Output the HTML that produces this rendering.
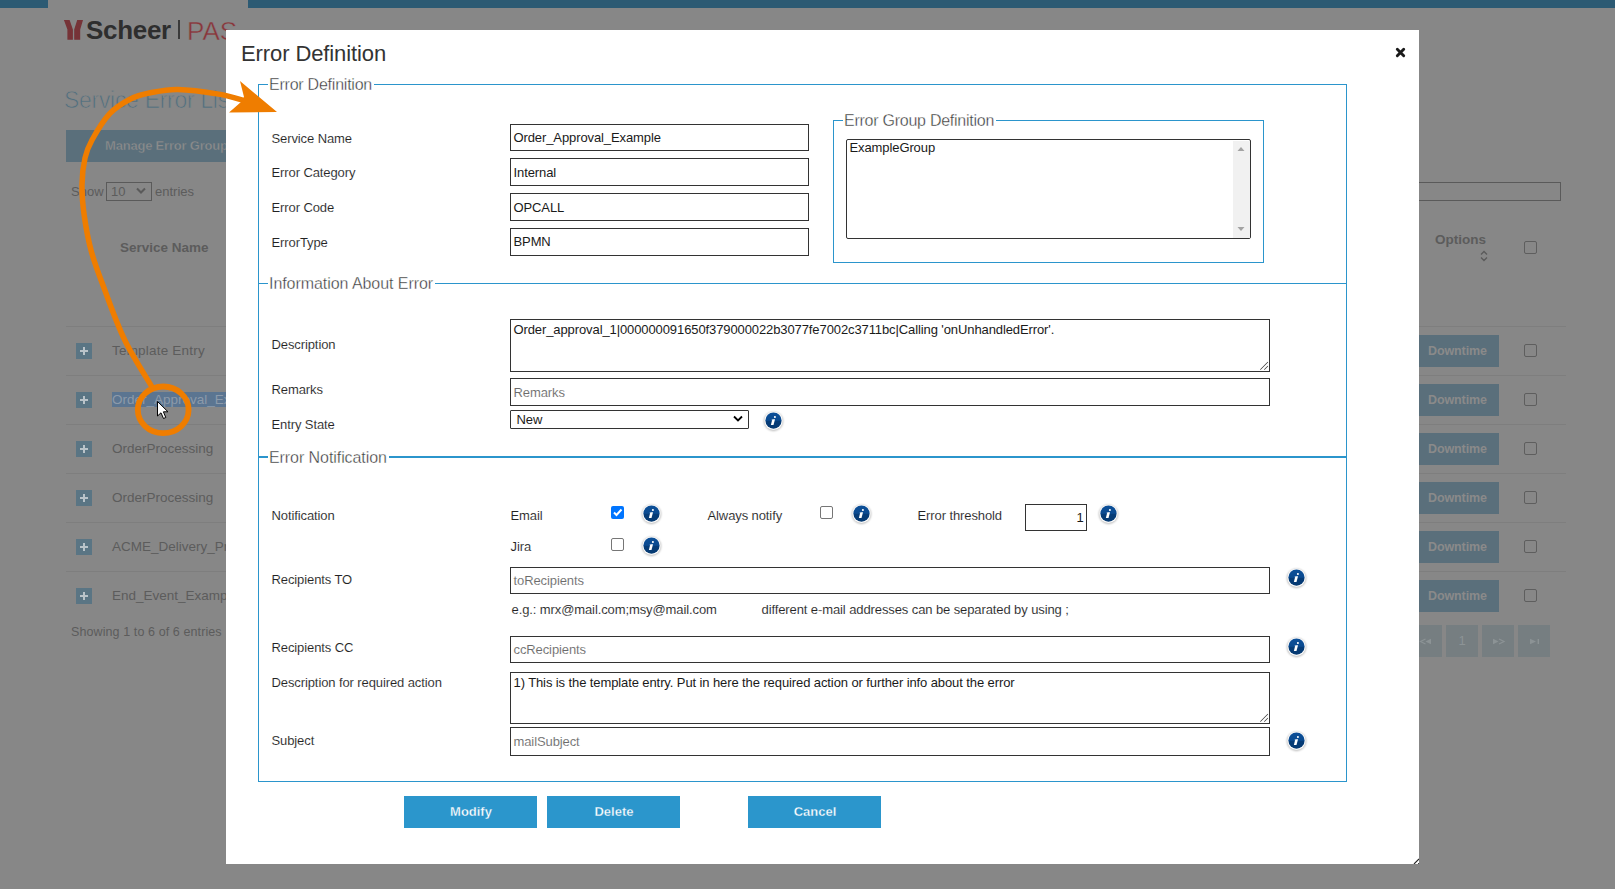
<!DOCTYPE html>
<html><head><meta charset="utf-8">
<style>
*{box-sizing:border-box;}
html,body{margin:0;padding:0;}
body{width:1615px;height:889px;overflow:hidden;position:relative;background:#878787;font-family:"Liberation Sans",sans-serif;}
.a{position:absolute;white-space:nowrap;line-height:1;}
.r{position:absolute;}
/* modal */
#modal{position:absolute;left:226px;top:30px;width:1193px;height:834px;background:#fff;}
.l{position:absolute;white-space:nowrap;line-height:1;font-size:13px;color:#222;letter-spacing:-0.1px;-webkit-text-stroke:0.1px #fff;margin-left:0.5px;}
.in{position:absolute;border:1px solid #333;background:#fff;}
.ph{color:#757575;}
.v{color:#1a1a1a;-webkit-text-stroke-width:0 !important;}
.ph{color:#6a6a6a !important;}
.leg{position:absolute;white-space:nowrap;line-height:1;font-size:16px;color:#333;background:#fff;padding:0 2px 0 1px;letter-spacing:-0.25px;-webkit-text-stroke:0.35px #fff;}
.hl{position:absolute;height:1px;background:#2b95cc;}
.vl{position:absolute;width:1px;background:#2b95cc;}
.btn{position:absolute;background:#2b96cc;color:#fff;font-size:13px;font-weight:bold;text-align:center;line-height:32px;height:32px;width:133px;top:796px;padding-left:1px;-webkit-text-stroke:0.3px #2b96cc;}
.info{position:absolute;width:24px;height:24px;overflow:visible;}
.cb{position:absolute;width:13px;height:13px;border:1px solid #767676;border-radius:2px;background:#fff;}
/* bg */
.bgt{position:absolute;white-space:nowrap;line-height:1;color:#5c5c5c;font-size:13.5px;}
.sep{position:absolute;left:66px;width:1500px;height:1px;background:#7e7e7e;}
.plus{position:absolute;left:76px;width:16px;height:16px;background:#5a7584;}
.plus:before{content:"";position:absolute;left:4px;top:7px;width:8px;height:2px;background:#b9c3c9;}
.plus:after{content:"";position:absolute;left:7px;top:4px;width:2px;height:8px;background:#b9c3c9;}
.dt{position:absolute;left:1400px;width:99px;height:32px;background:#5a6f7b;color:#8a8a8a;font-size:12.5px;font-weight:bold;letter-spacing:-0.1px;}
.dt span{position:absolute;left:28px;top:10px;line-height:1;}
.bcb{position:absolute;left:1524px;width:13px;height:13px;border:1px solid #5e5e5e;border-radius:2px;}
.pg{position:absolute;top:625px;width:32px;height:32px;background:#767e81;color:#8c9395;font-size:13px;text-align:center;line-height:32px;}
</style></head>
<body>
<!-- background page -->
<div class="r" style="left:0;top:0;width:48px;height:8px;background:#2c5a73"></div>
<div class="r" style="left:248px;top:0;width:1367px;height:8px;background:#2c5a73"></div>
<!-- logo -->
<svg class="r" style="left:60px;top:16px" width="26" height="26" viewBox="0 0 26 26">
<path d="M3.9 3.9 L9.6 3.9 L12.9 13.6 L12.9 23.8 L7.4 23.8 L7.4 13.6 Z" fill="#763337"/>
<path d="M17.2 3.9 L23 3.9 L20.2 13.6 L20.2 23.8 L14.2 23.8 L14.2 13.6 Z" fill="#763337"/>
</svg>
<div class="a" style="left:86px;top:17px;font-size:26px;font-weight:bold;color:#2e2e2e;letter-spacing:-0.3px">Scheer</div>
<div class="r" style="left:178px;top:20px;width:2px;height:19px;background:#3a3a3a"></div>
<div class="a" style="left:187px;top:18px;font-size:26px;color:#8a363b;letter-spacing:0px;font-weight:normal;-webkit-text-stroke:0.45px #878787">PAS</div>
<div class="a" style="left:64px;top:89px;font-size:23px;color:#52707f;letter-spacing:-0.3px;-webkit-text-stroke:0.75px #878787">Service Error List</div>
<div class="r" style="left:66px;top:130px;width:200px;height:32px;background:#5a6f7b"></div>
<div class="a" style="left:105px;top:139px;font-size:13px;font-weight:bold;color:#8c8c8c;letter-spacing:-0.2px;-webkit-text-stroke:0.35px #5a6f7b">Manage Error Groups</div>
<div class="bgt" style="left:71px;top:185px;font-size:13px">Show</div>
<div class="r" style="left:106px;top:182px;width:46px;height:19px;border:1px solid #5a5a5a"></div>
<div class="bgt" style="left:111px;top:185px;font-size:13px">10</div>
<svg class="r" style="left:136px;top:187px" width="10" height="8"><path d="M1 1.5 L5 5.5 L9 1.5" stroke="#5a5a5a" stroke-width="2" fill="none"/></svg>
<div class="bgt" style="left:155px;top:185px;font-size:13px">entries</div>
<div class="r" style="left:1400px;top:182px;width:161px;height:19px;border:1px solid #5a5a5a"></div>
<div class="bgt" style="left:120px;top:241px;font-weight:bold">Service Name</div>
<div class="bgt" style="left:1435px;top:233px;font-weight:bold">Options</div>
<svg class="r" style="left:1479px;top:250px" width="10" height="12"><path d="M2 4.5 L5 1.5 L8 4.5 M2 7.5 L5 10.5 L8 7.5" stroke="#5a5a5a" stroke-width="1.3" fill="none"/></svg>
<div class="bcb" style="top:241px"></div>
<div class="sep" style="top:326px"></div>
<div class="sep" style="top:375px"></div>
<div class="sep" style="top:424px"></div>
<div class="sep" style="top:473px"></div>
<div class="sep" style="top:522px"></div>
<div class="sep" style="top:571px"></div>
<div class="plus" style="top:343px"></div>
<div class="plus" style="top:392px"></div>
<div class="plus" style="top:441px"></div>
<div class="plus" style="top:490px"></div>
<div class="plus" style="top:539px"></div>
<div class="plus" style="top:588px"></div>
<div class="bgt" style="left:112px;top:344px;letter-spacing:0.2px">Template Entry</div>
<div class="r" style="left:112px;top:392px;width:120px;height:15px;background:#5b7591"></div>
<div class="bgt" style="left:112px;top:393px;color:#8c9aaa">Order_Approval_Example</div>
<div class="bgt" style="left:112px;top:442px">OrderProcessing</div>
<div class="bgt" style="left:112px;top:491px">OrderProcessing</div>
<div class="bgt" style="left:112px;top:540px">ACME_Delivery_Process</div>
<div class="bgt" style="left:112px;top:589px">End_Event_Example</div>
<div class="bgt" style="left:71px;top:626px;font-size:12.5px;letter-spacing:0.1px">Showing 1 to 6 of 6 entries</div>
<div class="dt" style="top:335px"><span>Downtime</span></div>
<div class="dt" style="top:384px"><span>Downtime</span></div>
<div class="dt" style="top:433px"><span>Downtime</span></div>
<div class="dt" style="top:482px"><span>Downtime</span></div>
<div class="dt" style="top:531px"><span>Downtime</span></div>
<div class="dt" style="top:580px"><span>Downtime</span></div>
<div class="bcb" style="top:344px"></div>
<div class="bcb" style="top:393px"></div>
<div class="bcb" style="top:442px"></div>
<div class="bcb" style="top:491px"></div>
<div class="bcb" style="top:540px"></div>
<div class="bcb" style="top:589px"></div>
<div class="pg" style="left:1410px"></div>
<div class="pg" style="left:1446px">1</div>
<div class="pg" style="left:1482px"></div>
<div class="pg" style="left:1518px"></div>
<svg class="r" style="left:1410px;top:630px" width="140" height="20"><g fill="#8c9395" stroke="#8c9395">
<path d="M15.5 9 L10.5 11.5 L15.5 14" fill="none" stroke-width="1.2"/><path d="M21 8.8 L15.5 11.5 L21 14.2 Z" stroke="none"/>
<path d="M83 8.8 L88.5 11.5 L83 14.2 Z" stroke="none"/><path d="M89 9 L94 11.5 L89 14" fill="none" stroke-width="1.2"/>
<path d="M120 8.8 L126 11.5 L120 14.2 Z" stroke="none"/><rect x="127.6" y="9" width="1.4" height="5" stroke="none"/>
</g></svg>
<!-- modal -->
<div id="modal"></div>
<div class="a" style="left:241px;top:43px;font-size:22px;color:#333;letter-spacing:-0.1px">Error Definition</div>
<svg class="r" style="left:1395px;top:47px" width="11" height="11" viewBox="0 0 11 11"><path d="M2.3 2.3 L8.7 8.7 M8.7 2.3 L2.3 8.7" stroke="#1a1a1a" stroke-width="2.9" stroke-linecap="round"/></svg>
<!-- resize handle -->
<svg class="r" style="left:1408px;top:853px" width="11" height="11"><path d="M11 6 L6 11" stroke="#222" stroke-width="1.1"/><circle cx="10.6" cy="10.5" r="0.6" fill="#222"/></svg>

<!-- fieldset lines -->
<div class="vl" style="left:258px;top:84px;height:698px"></div>
<div class="vl" style="left:1346px;top:84px;height:698px"></div>
<div class="hl" style="left:258px;top:84px;width:1089px"></div>
<div class="hl" style="left:258px;top:283px;width:1089px"></div>
<div class="hl" style="left:258px;top:456px;width:1089px;height:2px"></div>
<div class="hl" style="left:258px;top:781px;width:1089px"></div>
<div class="leg" style="left:268px;top:77px;letter-spacing:-0.23px">Error Definition</div>
<div class="leg" style="left:268px;top:276px;letter-spacing:-0.06px">Information About Error</div>
<div class="leg" style="left:268px;top:450px;letter-spacing:-0.07px">Error Notification</div>

<!-- section 1 -->
<div class="l" style="left:271px;top:132px">Service Name</div>
<div class="l" style="left:271px;top:166px">Error Category</div>
<div class="l" style="left:271px;top:201px">Error Code</div>
<div class="l" style="left:271px;top:236px">ErrorType</div>
<div class="in" style="left:510px;top:124px;width:299px;height:27px"></div>
<div class="in" style="left:510px;top:158px;width:299px;height:28px"></div>
<div class="in" style="left:510px;top:193px;width:299px;height:28px"></div>
<div class="in" style="left:510px;top:228px;width:299px;height:28px"></div>
<div class="l v" style="left:513px;top:131px">Order_Approval_Example</div>
<div class="l v" style="left:513px;top:166px">Internal</div>
<div class="l v" style="left:513px;top:201px">OPCALL</div>
<div class="l v" style="left:513px;top:235px">BPMN</div>
<!-- group fieldset -->
<div class="r" style="left:833px;top:120px;width:431px;height:143px;border:1px solid #2b95cc"></div>
<div class="leg" style="left:843px;top:113px;letter-spacing:-0.25px">Error Group Definition</div>
<div class="r" style="left:846px;top:139px;width:405px;height:100px;border:1px solid #333;border-radius:2px;background:#fff"></div>
<div class="r" style="left:1233px;top:141px;width:17px;height:97px;background:#f1f1f1"></div>
<svg class="r" style="left:1236px;top:144px" width="10" height="90"><path d="M1.5 7 L5 3 L8.5 7 Z" fill="#a3a3a3"/><path d="M1.5 83 L5 87 L8.5 83 Z" fill="#a3a3a3"/></svg>
<div class="l v" style="left:849px;top:141px">ExampleGroup</div>

<!-- section 2 -->
<div class="l" style="left:271px;top:338px">Description</div>
<div class="l" style="left:271px;top:383px">Remarks</div>
<div class="l" style="left:271px;top:418px">Entry State</div>
<div class="in" style="left:510px;top:319px;width:760px;height:53px"></div>
<svg class="r" style="left:1259px;top:361px" width="10" height="10"><path d="M8.8 1.2 L1.3 8.7 M8.8 5.2 L5.3 8.7" stroke="#555" stroke-width="1.1" stroke-dasharray="1.1 0.3"/></svg>
<div class="l v" style="left:513px;top:323px">Order_approval_1|000000091650f379000022b3077fe7002c3711bc|Calling 'onUnhandledError'.</div>
<div class="in" style="left:510px;top:378px;width:760px;height:28px"></div>
<div class="l ph" style="left:513px;top:386px">Remarks</div>
<div class="in" style="left:510px;top:410px;width:239px;height:19px;border-radius:1px"></div>
<div class="l v" style="left:516px;top:413px">New</div>
<svg class="r" style="left:733px;top:415px" width="10" height="8"><path d="M1 1.5 L5 5.5 L9 1.5" stroke="#000" stroke-width="1.8" fill="none"/></svg>

<!-- section 3 -->
<div class="l" style="left:271px;top:509px">Notification</div>
<div class="l" style="left:510px;top:509px">Email</div>
<div class="l" style="left:510px;top:540px">Jira</div>
<div class="l" style="left:707px;top:509px">Always notify</div>
<div class="l" style="left:917px;top:509px">Error threshold</div>
<div class="r" style="left:611px;top:506px;width:13px;height:13px;border-radius:2px;background:#0075ff"></div>
<svg class="r" style="left:611px;top:506px" width="13" height="13"><path d="M3 6.5 L5.5 9 L10.5 3.5" stroke="#fff" stroke-width="2" fill="none"/></svg>
<div class="cb" style="left:611px;top:538px"></div>
<div class="cb" style="left:820px;top:506px"></div>
<div class="in" style="left:1025px;top:504px;width:62px;height:27px"></div>
<div class="l v" style="left:1076px;top:511px">1</div>
<div class="l" style="left:271px;top:573px">Recipients TO</div>
<div class="in" style="left:510px;top:567px;width:760px;height:27px"></div>
<div class="l ph" style="left:513px;top:574px">toRecipients</div>
<div class="l" style="left:511px;top:603px">e.g.: mrx@mail.com;msy@mail.com</div>
<div class="l" style="left:761px;top:603px">different e-mail addresses can be separated by using ;</div>
<div class="l" style="left:271px;top:641px">Recipients CC</div>
<div class="in" style="left:510px;top:636px;width:760px;height:27px"></div>
<div class="l ph" style="left:513px;top:643px">ccRecipients</div>
<div class="l" style="left:271px;top:676px">Description for required action</div>
<div class="in" style="left:510px;top:672px;width:760px;height:52px"></div>
<svg class="r" style="left:1259px;top:713px" width="10" height="10"><path d="M8.8 1.2 L1.3 8.7 M8.8 5.2 L5.3 8.7" stroke="#555" stroke-width="1.1" stroke-dasharray="1.1 0.3"/></svg>
<div class="l v" style="left:513px;top:676px">1) This is the template entry. Put in here the required action or further info about the error</div>
<div class="l" style="left:271px;top:734px">Subject</div>
<div class="in" style="left:510px;top:727px;width:760px;height:29px"></div>
<div class="l ph" style="left:513px;top:735px">mailSubject</div>

<!-- info icons -->
<svg width="0" height="0" style="position:absolute">
<defs>
<linearGradient id="ig" x1="0" y1="0" x2="0" y2="1"><stop offset="0" stop-color="#0c4f98"/><stop offset="0.49" stop-color="#0a4a90"/><stop offset="0.51" stop-color="#053c78"/><stop offset="1" stop-color="#063a72"/></linearGradient>
<filter id="sh" x="-50%" y="-50%" width="200%" height="200%"><feGaussianBlur stdDeviation="0.9"/></filter>
<g id="ic"><circle cx="12.5" cy="12.3" r="9.6" fill="#000" opacity="0.28" filter="url(#sh)"/><circle cx="12.5" cy="11.7" r="9.2" fill="#fbfbfb"/><circle cx="12.5" cy="11.6" r="8.1" fill="url(#ig)"/><circle cx="13.9" cy="8.0" r="1.05" fill="#fff"/><path d="M11.3 10.3 L14.0 10.3 L12.5 15.9 L9.9 15.9 Z" fill="#fff"/><path d="M10.3 10.8 L11.2 10.3 L11.0 11.6 Z" fill="#8aa4c4"/></g>
</defs></svg>
<svg class="info" style="left:761px;top:409px"><use href="#ic"/></svg>
<svg class="info" style="left:639px;top:502px"><use href="#ic"/></svg>
<svg class="info" style="left:639px;top:534px"><use href="#ic"/></svg>
<svg class="info" style="left:849px;top:502px"><use href="#ic"/></svg>
<svg class="info" style="left:1096px;top:502px"><use href="#ic"/></svg>
<svg class="info" style="left:1284px;top:566px"><use href="#ic"/></svg>
<svg class="info" style="left:1284px;top:635px"><use href="#ic"/></svg>
<svg class="info" style="left:1284px;top:729px"><use href="#ic"/></svg>

<!-- buttons -->
<div class="btn" style="left:404px">Modify</div>
<div class="btn" style="left:547px">Delete</div>
<div class="btn" style="left:748px">Cancel</div>

<!-- annotation -->
<svg class="r" style="left:0;top:0" width="1615" height="889">
<path d="M152 387 C147.4 379.2 132.7 356.5 124.7 340 C116.7 323.5 109.5 302.7 104 288 C98.5 273.3 94.8 264.0 91.5 252 C88.2 240.0 85.9 227.2 84.3 216 C82.7 204.8 81.9 194.7 82 185 C82.1 175.3 83.3 165.5 85 158 C86.7 150.5 87.9 147.4 92 140 C96.1 132.6 103.4 120.5 109.7 113.7 C116.0 106.9 123.2 102.7 130 99.2 C136.8 95.7 142.5 94.4 150.4 92.8 C158.3 91.2 166.3 89.2 177.7 89.4 C189.1 89.6 207.5 92.2 218.6 94.1 C229.7 95.9 239.8 99.4 244 100.5" stroke="#ef7d00" stroke-width="5.5" fill="none"/>
<path d="M240 81 L277 112 L229 112.5 L241 102 L244 97 Z" fill="#ef7d00"/>
<ellipse cx="163.2" cy="409.8" rx="25.4" ry="23.3" stroke="#ef7d00" stroke-width="5.8" fill="none"/>
<path d="M157.5 401.5 L157.5 416 L161 412.8 L163.5 418.5 L165.8 417.5 L163.4 411.8 L168 411.8 Z" fill="#fff" stroke="#000" stroke-width="1"/>
</svg>
</body></html>
